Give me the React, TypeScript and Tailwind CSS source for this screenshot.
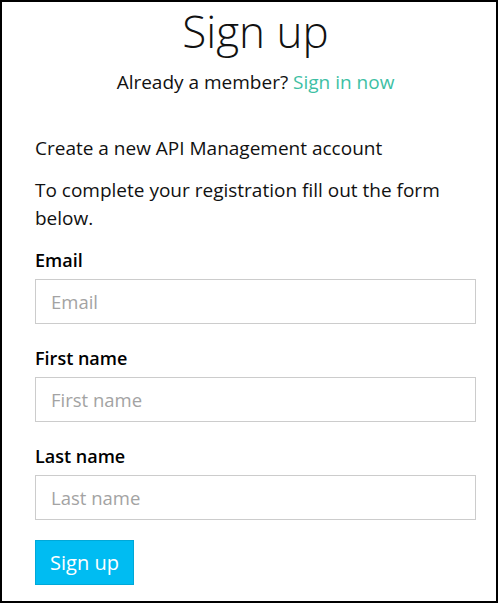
import React from "react";

export default function App() {
  const font = { fontFamily: '"Segoe UI", "Open Sans", "Noto Sans", sans-serif' };
  return (
    <div
      className="w-[498px] h-[603px] border-2 border-black bg-white text-[#111] pl-[33px] pr-[20px] box-border overflow-hidden"
      style={font}
    >
      <h1 className="text-center text-[44px] leading-[52px] font-light mt-[3px] text-[#111]">Sign up</h1>
      <p className="text-center text-[19px] leading-[28px] mt-[11px]">
        Already a member? <a className="text-[#3ebfa4]">Sign in now</a>
      </p>
      <p className="text-[19px] leading-[28px] mt-[38px]">Create a new API Management account</p>
      <p className="text-[19px] leading-[28px] mt-[14px]">
        To complete your registration fill out the form below.
      </p>
      <form className="mt-[14px] flex flex-col">
        {[
          ["Email", "Email"],
          ["First name", "First name"],
          ["Last name", "Last name"],
        ].map(([label, ph], i) => (
          <div key={label} className={i > 0 ? "mt-[20px]" : ""}>
            <label className="block text-[18px] leading-[28px] font-semibold text-black">{label}</label>
            <input
              placeholder={ph}
              className="mt-[5px] block w-[441px] h-[45px] border border-[#cccccc] px-[15px] text-[18.5px] placeholder:text-[#a3a3a3] outline-none"
              style={font}
            />
          </div>
        ))}
        <button
          type="button"
          className="mt-[20px] w-[99px] h-[45px] bg-[#00bcf2] border border-[#00a8d8] text-white text-[20px]"
          style={font}
        >
          Sign up
        </button>
      </form>
    </div>
  );
}
